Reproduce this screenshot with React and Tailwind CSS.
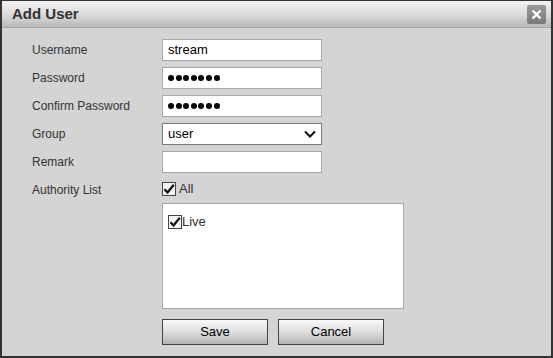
import React from "react";

const Check = () => (
  <span className="inline-flex w-[14px] h-[14px] border border-[#444] bg-[#f4f4f4] items-center justify-center shrink-0">
    <svg width="12" height="12" viewBox="0 0 12 12">
      <path d="M1.5 6.2 L4.5 9.5 L10.8 1.8" fill="none" stroke="#111" strokeWidth="2.2" />
    </svg>
  </span>
);

const Dots = () => (
  <div className="flex items-center gap-[1.6px]">
    {[0, 1, 2, 3, 4, 5, 6].map((i) => (
      <span key={i} className="w-[6px] h-[6px] rounded-full bg-black" />
    ))}
  </div>
);

const Row = ({ label, children }) => (
  <div className="flex items-center h-[22px]">
    <div className="w-[130px] text-[12px] text-[#333]">{label}</div>
    {children}
  </div>
);

const Box = ({ children, dark }) => (
  <div
    className={`w-[160px] h-[22px] bg-white border ${
      dark ? "border-[#7a7a7a]" : "border-[#a9a9a9]"
    } flex items-center px-[5px] text-[13px] text-black`}
  >
    {children}
  </div>
);

export default function App() {
  return (
    <div
      className="w-[553px] h-[358px] bg-[#333] p-[2px] pt-[1px]"
      style={{ fontFamily: '"Liberation Sans", Arial, sans-serif' }}
    >
      <div className="w-full h-full bg-[#d4d4d4] flex flex-col">
        {/* title bar */}
        <div className="h-[27px] flex items-center justify-between pl-[10px] pr-[5px] bg-gradient-to-b from-[#f2f2f2] via-[#dcdcdc] to-[#b9b9b9] border-b border-[#a4a4a4]">
          <span className="text-[15px] font-bold text-[#333]">Add User</span>
          <div className="w-[19px] h-[19px] rounded-[2px] bg-gradient-to-b from-[#9a9a9a] to-[#7a7a7a] flex items-center justify-center">
            <svg width="11" height="11" viewBox="0 0 11 11">
              <path d="M1.5 1.5 L9.5 9.5 M9.5 1.5 L1.5 9.5" stroke="#fff" strokeWidth="2.4" />
            </svg>
          </div>
        </div>

        {/* form */}
        <div className="pl-[30px] pt-[11px] flex flex-col gap-[6px]">
          <Row label="Username">
            <Box>stream</Box>
          </Row>
          <Row label="Password">
            <Box>
              <Dots />
            </Box>
          </Row>
          <Row label="Confirm Password">
            <Box>
              <Dots />
            </Box>
          </Row>
          <Row label="Group">
            <Box dark>
              <div className="flex-1">user</div>
              <svg width="12" height="8" viewBox="0 0 12 8">
                <path d="M1 1.5 L6 6.5 L11 1.5" fill="none" stroke="#111" strokeWidth="2" />
              </svg>
            </Box>
          </Row>
          <Row label="Remark">
            <Box />
          </Row>
          <Row label="Authority List">
            <div className="flex items-center gap-[3px] text-[13px] text-[#333] mt-[-3px]">
              <Check />
              <span>All</span>
            </div>
          </Row>
          <div className="ml-[130px] mt-[-4px] w-[242px] h-[106px] bg-white border border-[#a9a9a9] pt-[8px] pl-[5px]">
            <div className="flex items-center text-[13px] text-[#333]">
              <Check />
              <span>Live</span>
            </div>
          </div>
          <div className="ml-[130px] mt-[4px] flex gap-[10px]">
            {["Save", "Cancel"].map((t) => (
              <div
                key={t}
                className="w-[106px] h-[26px] border border-[#444] bg-gradient-to-b from-[#fafafa] via-[#dedede] to-[#b4b4b4] flex items-center justify-center text-[13px] text-black"
              >
                {t}
              </div>
            ))}
          </div>
        </div>
      </div>
    </div>
  );
}
